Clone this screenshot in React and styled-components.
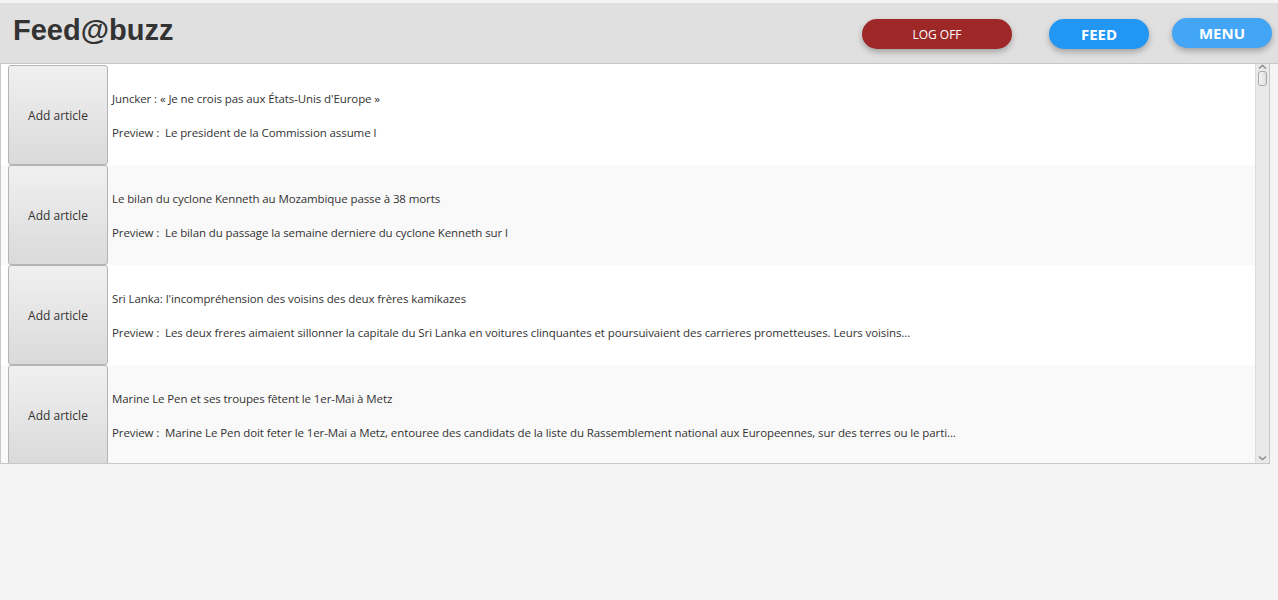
import React from "react";
import styled, { createGlobalStyle } from "styled-components";

const Global = createGlobalStyle`
	html, body {
		margin: 0;
		padding: 0;
		background: #f4f4f4;
	}
	body {
		font-family: "Open Sans", "Noto Sans", sans-serif;
	}
`;

const Page = styled.div`
	width: 1278px;
	height: 600px;
	padding-top: 3px;
	box-sizing: border-box;
	background: #f4f4f4;
`;

const Header = styled.header`
	height: 61px;
	background: #e0e0e0;
	border-bottom: 1px solid #c8c8c8;
	display: flex;
	align-items: flex-start;
	box-sizing: border-box;
	padding-right: 6px;
`;

const Title = styled.h1`
	margin: 0;
	padding: 9px 0 0 13px;
	font-family: "Liberation Sans", Arial, sans-serif;
	font-weight: bold;
	font-size: 29px;
	color: #333;
	flex: 1;
	line-height: 36px;
`;

const NavButton = styled.button`
	width: ${p => p.w}px;
	height: 30px;
	margin-top: ${p => p.top}px;
	margin-left: ${p => p.gap}px;
	border: none;
	border-radius: 15px;
	background: ${p => p.bg};
	color: #fff;
	font-family: "Open Sans", "Noto Sans", sans-serif;
	font-size: ${p => (p.bold ? "15px" : "12px")};
	font-weight: ${p => (p.bold ? 700 : 400)};
	box-shadow: 0 3px 6px rgba(0, 0, 0, 0.28);
	padding: 0;
	padding-bottom: ${p => (p.bold ? "1px" : "0")};
	cursor: pointer;
`;

const ListBox = styled.div`
	width: 1270px;
	height: 400px;
	border: 1px solid #c8c8c8;
	border-top: none;
	box-sizing: border-box;
	display: flex;
	background: #fff;
`;

const Rows = styled.div`
	flex: 1;
	overflow: hidden;
	padding-top: 1px;
`;

const Row = styled.div`
	height: 100px;
	display: flex;
	align-items: stretch;
	padding-left: 7px;
	background: ${p => (p.alt ? "#f9f9f9" : "#fff")};
`;

const AddButton = styled.button`
	width: 100px;
	flex: none;
	border: 1px solid #b4b4b4;
	border-radius: 3px;
	background: linear-gradient(#f0f0f0, #dadada);
	font-family: "Open Sans", "Noto Sans", sans-serif;
	font-size: 12px;
	color: #333;
	padding: 0;
`;

const Texts = styled.div`
	display: flex;
	flex-direction: column;
	justify-content: center;
	gap: 16px;
	padding-left: 4px;
	padding-top: 2px;
	font-family: "Open Sans", "Noto Sans", sans-serif;
	font-size: 11.5px;
	color: #333;
	letter-spacing: -0.1px;
	white-space: nowrap;
`;

const Line = styled.div`
	line-height: 18px;
`;

const ScrollBar = styled.div`
	width: 13px;
	flex: none;
	background: #e9e9e9;
	border-left: 1px solid #dcdcdc;
	display: flex;
	flex-direction: column;
	align-items: center;
	justify-content: space-between;
	padding: 0 0 2px;
`;

const Thumb = styled.div`
	width: 9px;
	height: 15px;
	margin-top: 1px;
	border: 1px solid #a8a8a8;
	border-radius: 3px;
	background: linear-gradient(90deg, #f4f4f4, #dedede);
	box-sizing: border-box;
`;

const Top = styled.div`
	display: flex;
	flex-direction: column;
	align-items: center;
`;

const Arrow = ({ down }) => (
	<svg width="9" height="6" viewBox="0 0 9 6">
		<path
			d={down ? "M1 1.5 L4.5 4.5 L8 1.5" : "M1 4.5 L4.5 1.5 L8 4.5"}
			fill="none"
			stroke="#8a8a8a"
			strokeWidth="1.4"
		/>
	</svg>
);

const articles = [
	{
		title: "Juncker : « Je ne crois pas aux États-Unis d'Europe »",
		preview: "Le president de la Commission assume l",
	},
	{
		title: "Le bilan du cyclone Kenneth au Mozambique passe à 38 morts",
		preview: "Le bilan du passage la semaine derniere du cyclone Kenneth sur l",
	},
	{
		title: "Sri Lanka: l'incompréhension des voisins des deux frères kamikazes",
		preview:
			"Les deux freres aimaient sillonner la capitale du Sri Lanka en voitures clinquantes et poursuivaient des carrieres prometteuses. Leurs voisins...",
	},
	{
		title: "Marine Le Pen et ses troupes fêtent le 1er-Mai à Metz",
		preview:
			"Marine Le Pen doit feter le 1er-Mai a Metz, entouree des candidats de la liste du Rassemblement national aux Europeennes, sur des terres ou le parti...",
	},
];

export default function App() {
	return (
		<Page>
			<Global />
			<Header>
				<Title>Feed@buzz</Title>
				<NavButton w={150} top={16} gap={0} bg="#9e2828">
					LOG OFF
				</NavButton>
				<NavButton w={100} top={16} gap={37} bg="#2196f3" bold>
					FEED
				</NavButton>
				<NavButton w={100} top={15} gap={23} bg="#42a5f5" bold>
					MENU
				</NavButton>
			</Header>
			<ListBox>
				<Rows>
					{articles.map((a, i) => (
						<Row key={i} alt={i % 2 === 1}>
							<AddButton>Add article</AddButton>
							<Texts>
								<Line>{a.title}</Line>
								<Line>Preview :&nbsp; {a.preview}</Line>
							</Texts>
						</Row>
					))}
				</Rows>
				<ScrollBar>
					<Top>
						<Arrow />
						<Thumb />
					</Top>
					<Arrow down />
				</ScrollBar>
			</ListBox>
		</Page>
	);
}
